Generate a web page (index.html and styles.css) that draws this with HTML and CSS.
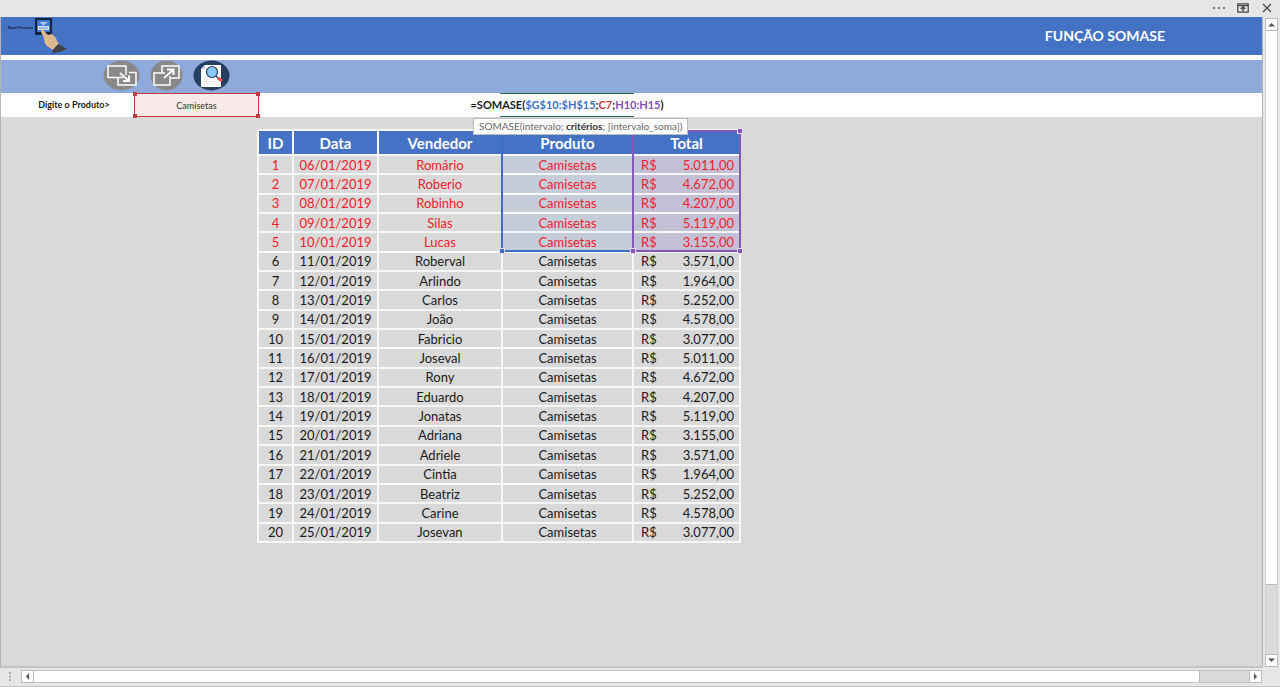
FILE: index.html
```html
<!DOCTYPE html>
<html lang="pt-BR">
<head>
<meta charset="utf-8">
<title>Função SOMASE</title>
<link rel="stylesheet" href="styles.css">
</head>
<body>
<div class="app">
  <header class="window-bar">
    <button class="bar-button" aria-label="Mais opções"><svg width="14" height="12" viewBox="0 0 14 12"><g fill="#777"><circle cx="3" cy="6" r="1.2"/><circle cx="8" cy="6" r="1.2"/><circle cx="13" cy="6" r="1.2"/></g></svg></button>
    <button class="bar-button" aria-label="Opções de exibição"><svg width="12" height="12" viewBox="0 0 12 12"><path d="M.8 1.8h10.400v8.400H.8zM1 3.600h10" fill="none" stroke="#444" stroke-width="1.200"/><path d="M6 9.500V5M3.800 7 6 4.800 8.200 7" fill="none" stroke="#444" stroke-width="1.400"/></svg></button>
    <button class="bar-button" aria-label="Fechar"><svg width="12" height="12" viewBox="0 0 12 12"><path d="M2 2l8 8M10 2l-8 8" stroke="#444" stroke-width="1.200"/></svg></button>
  </header>

  <main class="sheet">
    <div class="title-row">
      <div class="brand">
        <span class="brand-name">Excel Fórmula</span>
        <svg class="brand-art" width="34" height="38" viewBox="0 0 34 38">
          <path d="M1 1h17v17H1z" fill="#16233c"/>
          <path d="M3 3h13v12H3z" fill="#3f78d2"/>
          <path d="M5 5h9L9.500 8.500z" fill="#a9c5ef"/>
          <path d="M4 9h11v4H4z" fill="#d6e3f6"/>
          <path d="M5 11h9" stroke="#6789bd"/>
          <path d="M8 12q2 0 3 3l3 3 3-1q5 2 6 7l2 3-6 6-6-4q-3-3-3-8l-3-6z" fill="#deb88e"/>
          <path d="M19 36l-1-2 6-7 9 5-7 3z" fill="#413f47"/>
        </svg>
      </div>
      <h1 class="title">FUNÇÃO SOMASE</h1>
    </div>

    <nav class="tools">
      <button class="tool" aria-label="Recolher"><svg width="37" height="31" viewBox="0 0 37 31"><ellipse cx="18.500" cy="15.500" rx="18" ry="15" fill="#898989"/><g fill="none" stroke="#fff" stroke-width="1.500"><path d="M20 17.500H5V6h18v9"/><path d="M26 12.500h7V25H15v-7"/><path d="M17 13l9 8M26 15.500V21h-6" stroke-width="2"/></g></svg></button>
      <button class="tool" aria-label="Expandir"><svg width="33" height="31" viewBox="0 0 33 31"><ellipse cx="16.500" cy="15.500" rx="16" ry="15" fill="#898989"/><g fill="none" stroke="#fff" stroke-width="1.500"><path d="M12 12V6h17v12h-8"/><path d="M15 13H4v12h16v-9"/><path d="M14 18l9-8M17 9.500h6.500V15" stroke-width="2"/></g></svg></button>
      <button class="tool" aria-label="Pesquisar"><svg width="37" height="31" viewBox="0 0 37 31"><ellipse cx="18.500" cy="15.500" rx="18" ry="15" fill="#263e60"/><path d="M12 5h16v22H8V9z" fill="#fff"/><path d="M8 9l4-4v4z" fill="#ccd5df"/><path d="M11 19h12M11 21.500h14M11 24h11" stroke="#e2e5ea"/><circle cx="19" cy="12" r="5.500" fill="#8acbf5" stroke="#243b5d" stroke-width="1.200"/><path d="M23 16l2 2" stroke="#243b5d" stroke-width="1.500"/><path d="M25 18l4 3" stroke="#ee5146" stroke-width="3"/></svg></button>
    </nav>

    <div class="entry-row">
      <label class="entry-label" for="produto">Digite o Produto&gt;</label>
      <div class="entry-cell">
        <input class="entry-input" id="produto" type="text" value="Camisetas">
        <i class="grip grip-nw"></i><i class="grip grip-ne"></i><i class="grip grip-sw"></i><i class="grip grip-se"></i>
      </div>
      <div class="formula-cell">
        <output class="formula">=SOMASE(<span class="ref-blue">$G$10:$H$15</span>;<span class="ref-red">C7</span>;<span class="ref-purple">H10:H15</span>)</output>
        <div class="hint" role="tooltip">SOMASE(intervalo; <b>critérios</b>; [intervalo_soma])</div>
      </div>
    </div>

    <div class="data">
      <table class="sales">
        <colgroup><col class="col-id"><col class="col-date"><col class="col-seller"><col class="col-product"><col class="col-total"></colgroup>
        <thead><tr><th>ID</th><th>Data</th><th>Vendedor</th><th>Produto</th><th>Total</th></tr></thead>
        <tbody>
          <tr class="match"><td>1</td><td>06/01/2019</td><td>Romário</td><td>Camisetas</td><td><div class="money"><span>R$</span><span>5.011,00</span></div></td></tr>
          <tr class="match"><td>2</td><td>07/01/2019</td><td>Roberio</td><td>Camisetas</td><td><div class="money"><span>R$</span><span>4.672,00</span></div></td></tr>
          <tr class="match"><td>3</td><td>08/01/2019</td><td>Robinho</td><td>Camisetas</td><td><div class="money"><span>R$</span><span>4.207,00</span></div></td></tr>
          <tr class="match"><td>4</td><td>09/01/2019</td><td>Silas</td><td>Camisetas</td><td><div class="money"><span>R$</span><span>5.119,00</span></div></td></tr>
          <tr class="match"><td>5</td><td>10/01/2019</td><td>Lucas</td><td>Camisetas</td><td><div class="money"><span>R$</span><span>3.155,00</span></div></td></tr>
          <tr><td>6</td><td>11/01/2019</td><td>Roberval</td><td>Camisetas</td><td><div class="money"><span>R$</span><span>3.571,00</span></div></td></tr>
          <tr><td>7</td><td>12/01/2019</td><td>Arlindo</td><td>Camisetas</td><td><div class="money"><span>R$</span><span>1.964,00</span></div></td></tr>
          <tr><td>8</td><td>13/01/2019</td><td>Carlos</td><td>Camisetas</td><td><div class="money"><span>R$</span><span>5.252,00</span></div></td></tr>
          <tr><td>9</td><td>14/01/2019</td><td>João</td><td>Camisetas</td><td><div class="money"><span>R$</span><span>4.578,00</span></div></td></tr>
          <tr><td>10</td><td>15/01/2019</td><td>Fabricio</td><td>Camisetas</td><td><div class="money"><span>R$</span><span>3.077,00</span></div></td></tr>
          <tr><td>11</td><td>16/01/2019</td><td>Joseval</td><td>Camisetas</td><td><div class="money"><span>R$</span><span>5.011,00</span></div></td></tr>
          <tr><td>12</td><td>17/01/2019</td><td>Rony</td><td>Camisetas</td><td><div class="money"><span>R$</span><span>4.672,00</span></div></td></tr>
          <tr><td>13</td><td>18/01/2019</td><td>Eduardo</td><td>Camisetas</td><td><div class="money"><span>R$</span><span>4.207,00</span></div></td></tr>
          <tr><td>14</td><td>19/01/2019</td><td>Jonatas</td><td>Camisetas</td><td><div class="money"><span>R$</span><span>5.119,00</span></div></td></tr>
          <tr><td>15</td><td>20/01/2019</td><td>Adriana</td><td>Camisetas</td><td><div class="money"><span>R$</span><span>3.155,00</span></div></td></tr>
          <tr><td>16</td><td>21/01/2019</td><td>Adriele</td><td>Camisetas</td><td><div class="money"><span>R$</span><span>3.571,00</span></div></td></tr>
          <tr><td>17</td><td>22/01/2019</td><td>Cintia</td><td>Camisetas</td><td><div class="money"><span>R$</span><span>1.964,00</span></div></td></tr>
          <tr><td>18</td><td>23/01/2019</td><td>Beatriz</td><td>Camisetas</td><td><div class="money"><span>R$</span><span>5.252,00</span></div></td></tr>
          <tr><td>19</td><td>24/01/2019</td><td>Carine</td><td>Camisetas</td><td><div class="money"><span>R$</span><span>4.578,00</span></div></td></tr>
          <tr><td>20</td><td>25/01/2019</td><td>Josevan</td><td>Camisetas</td><td><div class="money"><span>R$</span><span>3.077,00</span></div></td></tr>
        </tbody>
      </table>
      <div class="range range-blue"><i class="grip grip-sw"></i></div>
      <div class="range range-purple"><i class="grip grip-ne"></i><i class="grip grip-sw"></i><i class="grip grip-se"></i></div>
    </div>
  </main>

  <div class="vscroll">
    <button class="arrow" aria-label="Rolar para cima"><svg width="7" height="5" viewBox="0 0 7 5"><path d="M0 4.500h7L3.500 1z" fill="#555"/></svg></button>
    <div class="vtrack"><div class="vthumb"></div></div>
    <button class="arrow" aria-label="Rolar para baixo"><svg width="7" height="5" viewBox="0 0 7 5"><path d="M0 .5h7L3.500 4z" fill="#555"/></svg></button>
  </div>

  <footer class="hscroll">
    <svg class="dots" width="3" height="9" viewBox="0 0 3 9"><path d="M0 0h2v2H0zM0 3.500h2v2H0zM0 7h2v2H0z" fill="#aaa"/></svg>
    <button class="arrow" aria-label="Rolar para a esquerda"><svg width="5" height="7" viewBox="0 0 5 7"><path d="M4 0v7L1 3.500z" fill="#555"/></svg></button>
    <div class="htrack"><div class="hthumb"></div></div>
    <button class="arrow" aria-label="Rolar para a direita"><svg width="5" height="7" viewBox="0 0 5 7"><path d="M1 0v7l3-3.500z" fill="#555"/></svg></button>
  </footer>
</div>
</body>
</html>
```

FILE: styles.css
```css
* { box-sizing: border-box; }

body {
  margin: 0;
  background: #e6e6e5;
  color: #1a1a1a;
  font-family: Lato, "Noto Sans", sans-serif;
  font-size: 13px;
}

button {
  display: flex;
  align-items: center;
  justify-content: center;
  padding: 0;
  border: 0;
  background: none;
}

.app {
  display: grid;
  grid-template-columns: 1fr 17px;
  grid-template-rows: 17px 1fr 19px;
  min-height: 100vh;
}

.window-bar {
  grid-column: 1 / -1;
  display: flex;
  align-items: center;
  justify-content: flex-end;
  gap: 12px;
  padding: 0 7px 1px 0;
}

.sheet {
  display: flex;
  flex-direction: column;
  border: 1px solid #b5b5b5;
  border-top: 0;
  border-bottom: 2px solid #c3c3c3;
  background: #d9d9d9;
}

.title-row {
  display: flex;
  justify-content: space-between;
  height: 38px;
  background: #4472c4;
}

.brand { display: flex; align-items: flex-start; padding-left: 7px; }
.brand-name { margin-top: 8px; color: #101b33; font-size: 4px; font-weight: 700; line-height: 6px; }
.brand-art { margin-left: 1px; }

.title {
  margin: 0;
  padding-right: 97px;
  color: #fff;
  font-size: 14px;
  line-height: 37px;
}

.tools {
  display: flex;
  align-items: flex-start;
  gap: 10px;
  height: 38px;
  padding-left: 102px;
  border-top: 5px solid #fff;
  background: #8eaadb;
}

.entry-row { display: flex; height: 24px; background: #fff; }

.entry-label {
  width: 133px;
  padding-left: 13px;
  font-size: 9px;
  font-weight: 700;
  line-height: 24px;
  text-align: center;
}

.entry-cell { position: relative; width: 125px; }

.entry-input {
  width: 100%;
  height: 100%;
  padding: 0;
  border: 1px solid #c0393f;
  background: #f8eae8;
  color: #333;
  font: inherit;
  font-size: 9px;
  text-align: center;
}

.formula-cell {
  position: relative;
  display: flex;
  justify-content: center;
  width: 134px;
  margin-left: 241px;
  border-top: 1px solid #217346;
  border-bottom: 1px solid #217346;
}

.formula { font-size: 11px; font-weight: 700; line-height: 22px; white-space: nowrap; }
.ref-blue { color: #3b74c7; }
.ref-red { color: #c0393f; }
.ref-purple { color: #8250b4; }

.hint {
  position: absolute;
  z-index: 2;
  top: 24px;
  left: -27px;
  padding: 0 5px;
  border: 1px solid #bbb;
  background: #fff;
  color: #666;
  font-size: 10px;
  line-height: 15px;
  white-space: nowrap;
}

.hint b { color: #333; }

.data { position: relative; width: 484px; margin: 12px 0 0 256px; }

.sales {
  width: 100%;
  height: 414px;
  border-collapse: collapse;
  table-layout: fixed;
}

.col-id { width: 35px; }
.col-date { width: 85px; }
.col-seller { width: 124px; }
.col-product { width: 131px; }
.col-total { width: 107px; }

.sales th, .sales td {
  padding: 0;
  border: 2px solid #f7f7f7;
  line-height: 16px;
  text-align: center;
}

.sales th { height: 25px; background: #4472c4; color: #fff; font-size: 15px; }
.match { color: #f0202a; }
.match td:nth-child(4) { background: #c6cdda; }
.match td:nth-child(5) { background: #c3c0d5; }
.match + .match td:nth-child(4), .match + .match td:nth-child(5) { border-top-color: #dcdfee; }
.money { display: flex; justify-content: space-between; padding: 0 5px 0 7px; }

.range { position: absolute; top: 1px; height: 122px; }
.range-blue { left: 244px; width: 131px; border: 2px solid #3b6fc5; border-width: 0 0 2px 2px; color: #3b6fc5; }
.range-purple { left: 375px; width: 109px; border: 2px solid #8458b8; color: #8458b8; }

.grip { position: absolute; width: 4px; height: 4px; background: currentColor; outline: 1px solid #e6dcee; }
.entry-cell .grip { color: #c0393f; outline: 0; }
.grip-nw { top: -1px; left: -1px; }
.grip-ne { top: -1px; right: -1px; }
.grip-sw { bottom: -1px; left: -1px; }
.grip-se { right: -1px; bottom: -1px; }
.range .grip-ne { top: -3px; right: -3px; }
.range .grip-sw { bottom: -3px; left: -3px; }
.range .grip-se { right: -3px; bottom: -3px; }

.arrow { flex: none; width: 13px; height: 13px; border: 1px solid #bbb; background: #fff; }

.vscroll { display: flex; flex-direction: column; padding: 1px 2px 1px; }
.vtrack { flex: 1; border: solid #d0d0d0; border-width: 0 1px; background: #dadada; }
.vthumb { height: 89%; border-bottom: 1px solid #bbb; background: #fff; }

.hscroll {
  grid-column: 1 / -1;
  display: flex;
  align-items: flex-start;
  padding: 2px 18px 0 9px;
  border-bottom: 1px solid #bcc5ca;
}

.dots { margin: 2px 9px 0 0; }
.htrack { flex: 1; height: 13px; border: solid #c4c4c4; border-width: 1px 0; background: #dadada; }
.hthumb { width: 96%; height: 100%; border-right: 1px solid #bbb; background: #fff; }
```
